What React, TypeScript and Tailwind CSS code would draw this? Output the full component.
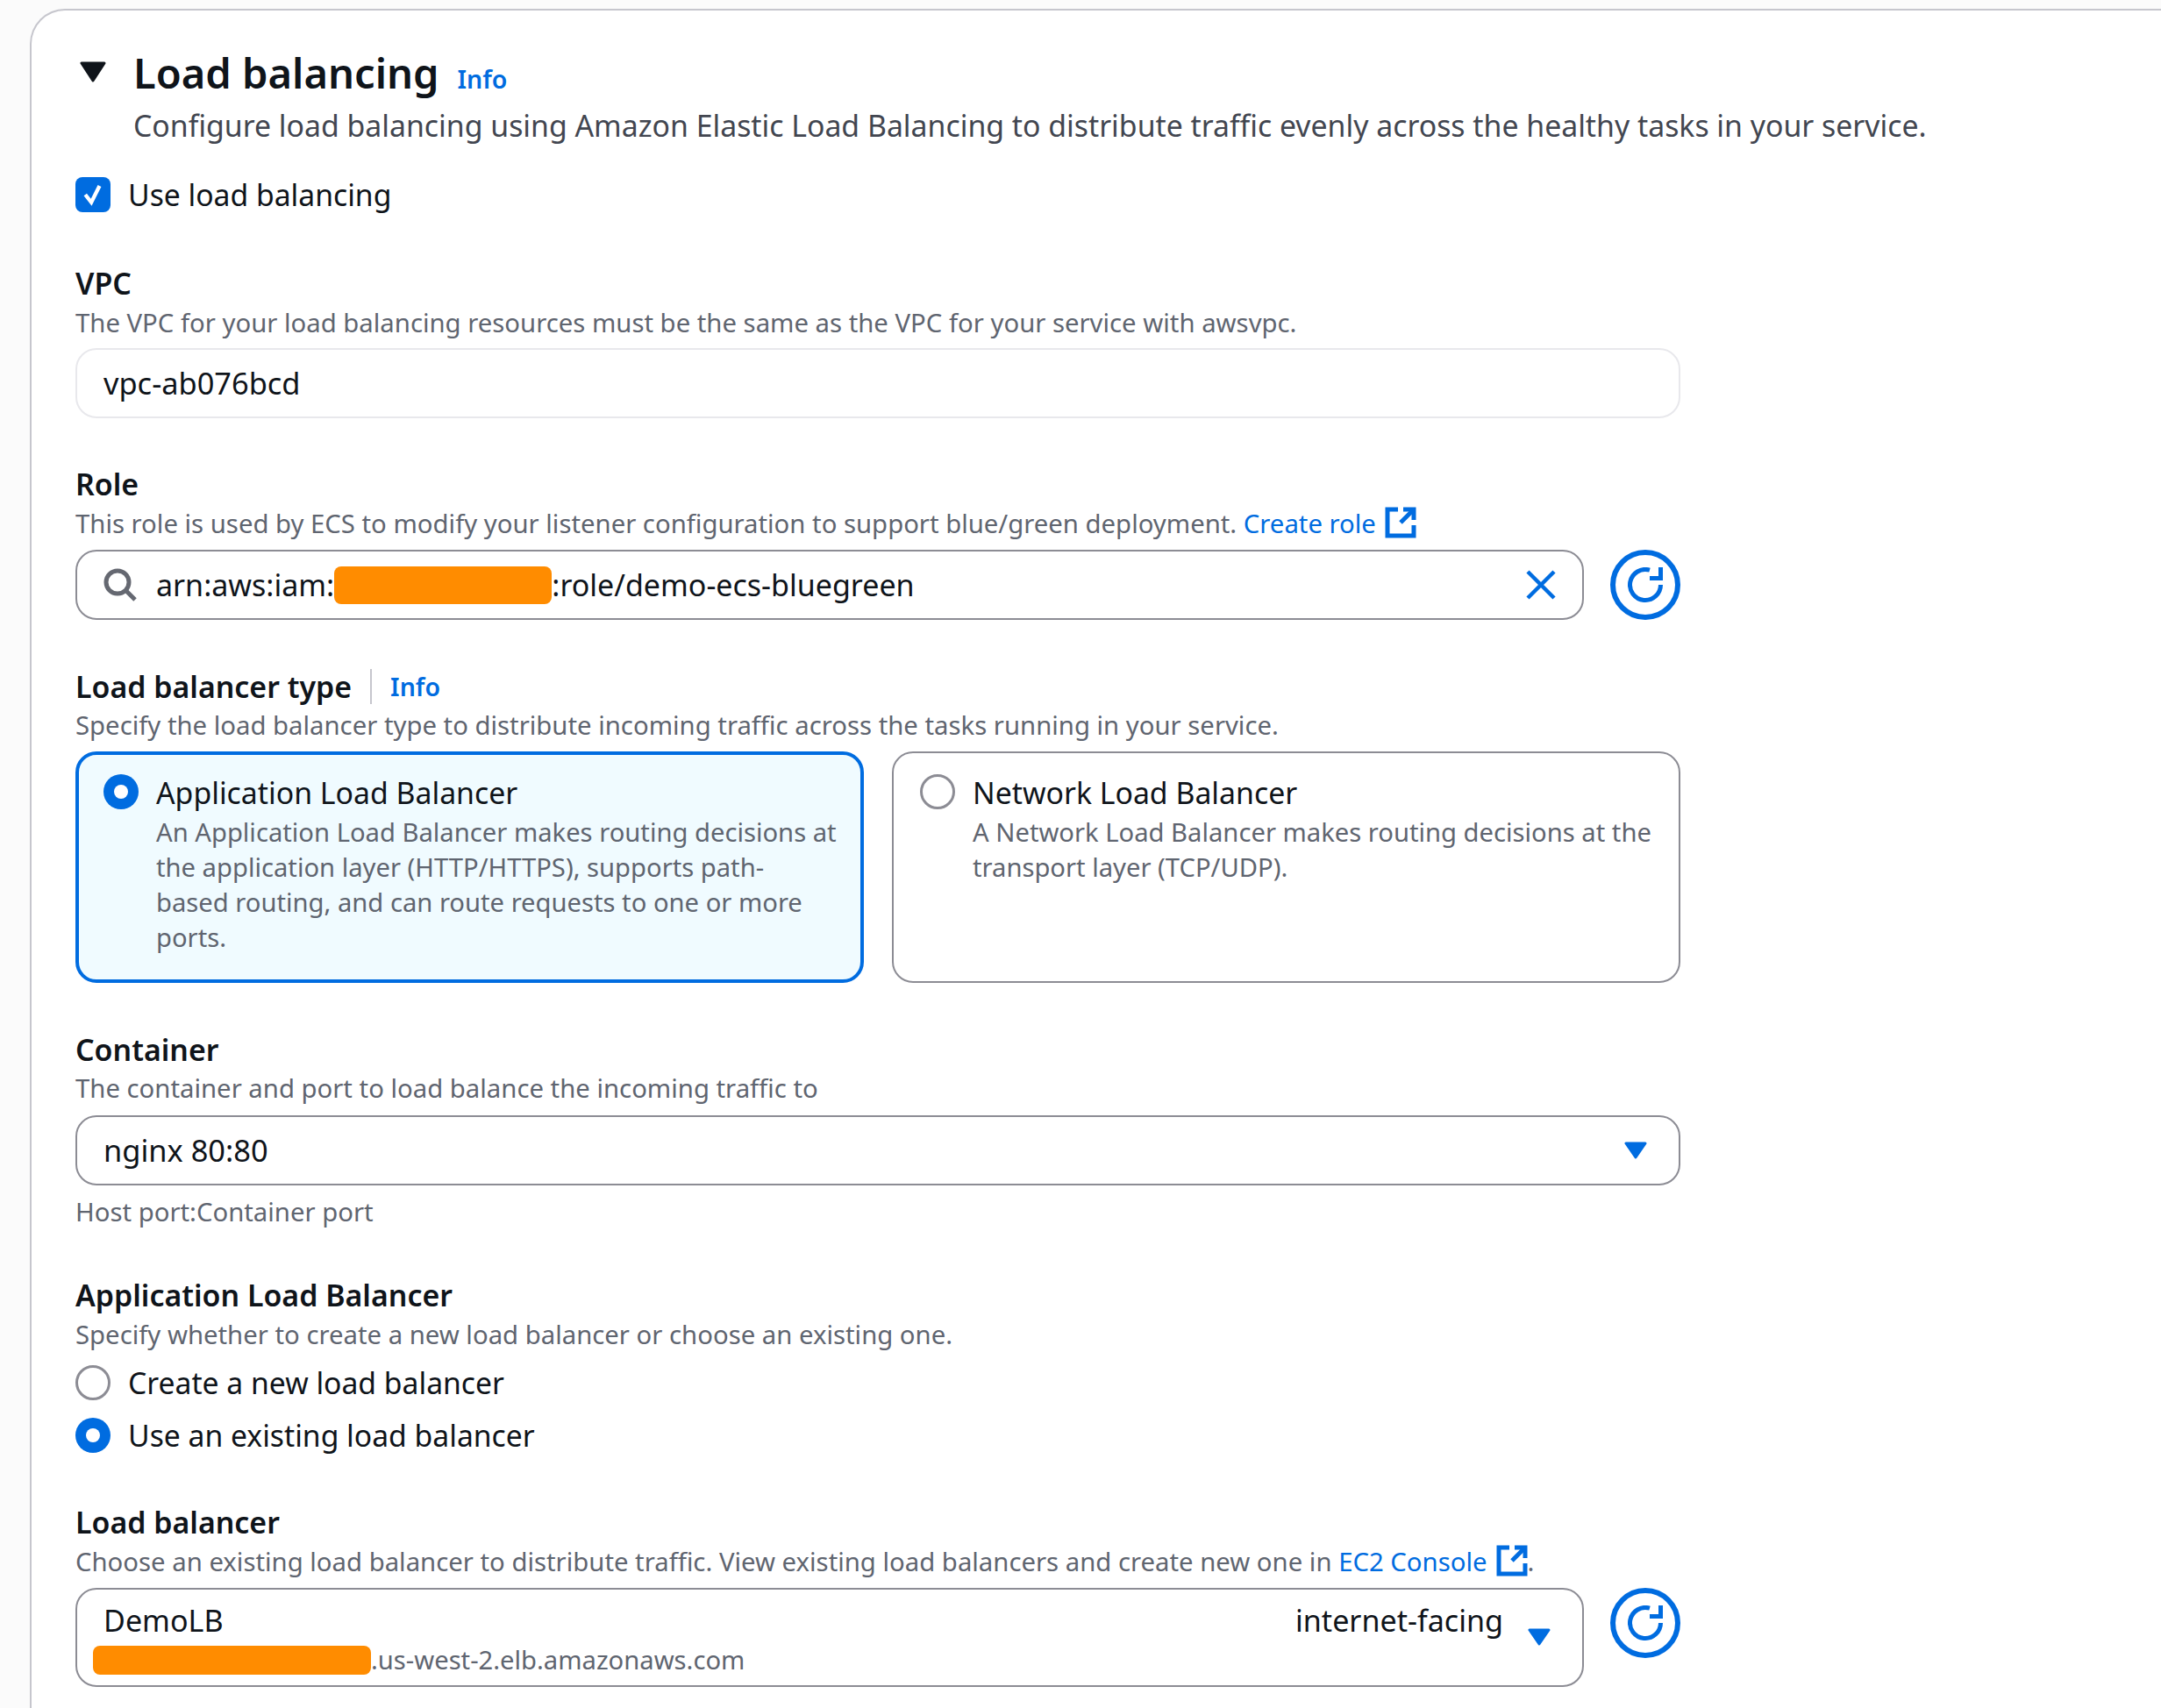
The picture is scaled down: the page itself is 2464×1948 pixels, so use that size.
const sans = "font-['Noto_Sans',sans-serif]";

function ExternalIcon() {
  return (
    <svg viewBox="0 0 36 36" className="ml-[10px] inline-block h-[36px] w-[36px] align-[-6px]" fill="none" stroke="#006ce0" strokeWidth="5">
      <path d="M15 3H3V33H33V21" />
      <path d="M33 15V3H21" />
      <path d="M33 3L18 18" />
    </svg>
  );
}

function RefreshButton() {
  return (
    <div className="flex h-[80px] w-[80px] shrink-0 items-center justify-center rounded-full border-[6px] border-[#006ce0]">
      <svg viewBox="0 0 40 40" className="h-[40px] w-[40px]" fill="none" stroke="#006ce0" strokeWidth="5">
        <path d="M37.5 20A17.5 17.5 0 1 1 25 3.2" />
        <path d="M37.5 0V12.5H25" />
      </svg>
    </div>
  );
}

function Caret() {
  return (
    <svg viewBox="0 0 26 20" className="h-[20px] w-[26px] shrink-0" fill="#006ce0">
      <path d="M2 2H24L13 18Z" stroke="#006ce0" strokeWidth="3" strokeLinejoin="round" />
    </svg>
  );
}

function Radio({ checked }: { checked: boolean }) {
  return checked ? (
    <span className="flex h-[40px] w-[40px] shrink-0 items-center justify-center rounded-full bg-[#006ce0]">
      <span className="h-[16px] w-[16px] rounded-full bg-white" />
    </span>
  ) : (
    <span className="h-[40px] w-[40px] shrink-0 rounded-full border-[3px] border-[#8c8c94] bg-white" />
  );
}

function Label({ children }: { children: React.ReactNode }) {
  return <div className="h-[40px] text-[33.9px] leading-[40px] font-semibold text-[#0f141a]">{children}</div>;
}

function Hint({ children }: { children: React.ReactNode }) {
  return <div className="h-[40px] text-[29.3px] leading-[40px] whitespace-nowrap text-[#5f6570]">{children}</div>;
}

function TypeCard({ selected, title, lines }: { selected: boolean; title: string; lines: string[] }) {
  return (
    <div
      className={
        selected
          ? "flex h-[264px] gap-[20px] rounded-[24px] border-[4px] border-[#006ce0] bg-[#f0fbff] pt-[22px] pl-[28px]"
          : "flex h-[264px] gap-[20px] rounded-[24px] border-[2px] border-[#8c8c94] bg-white pt-[24px] pl-[30px]"
      }
    >
      <Radio checked={selected} />
      <div>
        <div className="-mt-[1px] h-[47px] text-[33.8px] leading-[44px] text-[#0f141a]">{title}</div>
        {lines.map((line) => (
          <div key={line} className="text-[29.2px] leading-[40px] whitespace-nowrap text-[#5f6570]">
            {line}
          </div>
        ))}
      </div>
    </div>
  );
}

export default function App() {
  return (
    <div className={`h-[1948px] overflow-hidden bg-[#fbfbfb] pt-[10px] pl-[34px] ${sans}`}>
      <div className="h-[1938px] rounded-tl-[40px] border-t-[2px] border-l-[2px] border-[#c6c6cd] bg-white pt-[50px] pl-[50px]">
        <div className="flex w-[1830px] flex-col">
          <div className="flex items-start pl-[5px]">
            <svg viewBox="0 0 30 24" className="mt-[8px] h-[24px] w-[30px] shrink-0" fill="#0f141a">
              <path d="M2 2H28L15 22Z" stroke="#0f141a" strokeWidth="3" strokeLinejoin="round" />
            </svg>
            <div className="ml-[31px]">
              <div className="-mt-[2px] flex items-baseline">
                <span className="text-[47.1px] leading-[46px] font-semibold text-[#0f141a]">Load balancing</span>
                <span className="ml-[21px] text-[28.5px] leading-[46px] font-semibold text-[#006ce0]">Info</span>
              </div>
              <div className="mt-[7px] text-[33.8px] leading-[46px] whitespace-nowrap text-[#424650]">
                Configure load balancing using Amazon Elastic Load Balancing to distribute traffic evenly across the healthy tasks in your service.
              </div>
            </div>
          </div>

          <div className="mt-[36px] flex items-center gap-[20px]">
            <span className="flex h-[40px] w-[40px] items-center justify-center rounded-[8px] bg-[#006ce0]">
              <svg viewBox="0 0 24 24" className="h-[30px] w-[30px]" fill="none" stroke="white" strokeWidth="3.5">
                <path d="M5 12L10.5 19L18 4" />
              </svg>
            </span>
            <span className="text-[33.7px] leading-[40px] text-[#0f141a]">Use load balancing</span>
          </div>

          <div className="mt-[61px]">
            <Label>VPC</Label>
            <div className="mt-[5px]">
              <Hint>The VPC for your load balancing resources must be the same as the VPC for your service with awsvpc.</Hint>
            </div>
            <div className="mt-[9px] flex h-[80px] items-center rounded-[24px] border-[2px] border-[#e8e8ec] pl-[30px] text-[34.4px] text-[#0f141a]">
              vpc-ab076bcd
            </div>
          </div>

          <div className="mt-[55px]">
            <Label>Role</Label>
            <div className="mt-[5px]">
              <Hint>
                This role is used by ECS to modify your listener configuration to support blue/green deployment.{" "}
                <span className="text-[#006ce0]">Create role</span>
                <ExternalIcon />
              </Hint>
            </div>
            <div className="mt-[10px] flex items-center gap-[30px]">
              <div className="flex h-[80px] w-[1720px] items-center rounded-[24px] border-[2px] border-[#8c8c94] pr-[30px] pl-[30px] text-[34px] text-[#0f141a]">
                <svg viewBox="0 0 38 38" className="h-[38px] w-[38px] shrink-0" fill="none" stroke="#656871" strokeWidth="5">
                  <circle cx="16" cy="16" r="13" />
                  <path d="M25 25L36 36" />
                </svg>
                <span className="ml-[22px]">arn:aws:iam::</span>
                <span className="-ml-[9px] h-[43px] w-[248px] shrink-0 rounded-[8px] bg-[#ff8c00]" />
                <span>:role/demo-ecs-bluegreen</span>
                <svg viewBox="0 0 34 34" className="ml-auto h-[34px] w-[34px] shrink-0" fill="none" stroke="#006ce0" strokeWidth="4.5">
                  <path d="M2 2L32 32M32 2L2 32" />
                </svg>
              </div>
              <RefreshButton />
            </div>
          </div>

          <div className="mt-[56px]">
            <div className="flex h-[40px] items-center">
              <span className="text-[33.9px] leading-[40px] font-semibold text-[#0f141a]">Load balancer type</span>
              <span className="mx-[21px] h-[40px] w-[2px] bg-[#c6c6cd]" />
              <span className="text-[28.5px] leading-[40px] font-semibold text-[#006ce0]">Info</span>
            </div>
            <div className="mt-[4px]">
              <Hint>Specify the load balancer type to distribute incoming traffic across the tasks running in your service.</Hint>
            </div>
            <div className="mt-[10px] grid grid-cols-2 gap-[32px]">
              <TypeCard
                selected
                title="Application Load Balancer"
                lines={[
                  "An Application Load Balancer makes routing decisions at",
                  "the application layer (HTTP/HTTPS), supports path-",
                  "based routing, and can route requests to one or more",
                  "ports.",
                ]}
              />
              <TypeCard
                selected={false}
                title="Network Load Balancer"
                lines={["A Network Load Balancer makes routing decisions at the", "transport layer (TCP/UDP)."]}
              />
            </div>
          </div>

          <div className="mt-[56px]">
            <Label>Container</Label>
            <div className="mt-[4px]">
              <Hint>The container and port to load balance the incoming traffic to</Hint>
            </div>
            <div className="mt-[11px] flex h-[80px] items-center justify-between rounded-[24px] border-[2px] border-[#8c8c94] pr-[36px] pl-[30px] text-[34.4px] text-[#0f141a]">
              nginx 80:80
              <Caret />
            </div>
            <div className="mt-[10px]">
              <Hint>Host port:Container port</Hint>
            </div>
          </div>

          <div className="mt-[55px]">
            <Label>Application Load Balancer</Label>
            <div className="mt-[5px]">
              <Hint>Specify whether to create a new load balancer or choose an existing one.</Hint>
            </div>
            <div className="mt-[15px] flex items-center gap-[20px]">
              <Radio checked={false} />
              <span className="text-[33.7px] leading-[40px] text-[#0f141a]">Create a new load balancer</span>
            </div>
            <div className="mt-[20px] flex items-center gap-[20px]">
              <Radio checked />
              <span className="text-[33.7px] leading-[40px] text-[#0f141a]">Use an existing load balancer</span>
            </div>
          </div>

          <div className="mt-[59px]">
            <Label>Load balancer</Label>
            <div className="mt-[5px]">
              <Hint>
                Choose an existing load balancer to distribute traffic. View existing load balancers and create new one in{" "}
                <span className="text-[#006ce0]">EC2 Console</span>
                <ExternalIcon />.
              </Hint>
            </div>
            <div className="mt-[10px] flex items-start gap-[30px]">
              <div className="relative h-[113px] w-[1720px] rounded-[24px] border-[2px] border-[#8c8c94]">
                <div className="flex justify-between pt-[13px] pr-[90px] pl-[30px] text-[34.1px] leading-[44px] text-[#0f141a]">
                  <span>DemoLB</span>
                  <span>internet-facing</span>
                </div>
                <div className="mt-[5px] flex items-center pl-[18px] text-[29.2px] leading-[36px] text-[#5f6570]">
                  <span className="h-[33px] w-[317px] rounded-[8px] bg-[#ff8c00]" />
                  <span>.us-west-2.elb.amazonaws.com</span>
                </div>
                <span className="absolute top-[44px] right-[36px]">
                  <Caret />
                </span>
              </div>
              <RefreshButton />
            </div>
          </div>
        </div>
      </div>
    </div>
  );
}
